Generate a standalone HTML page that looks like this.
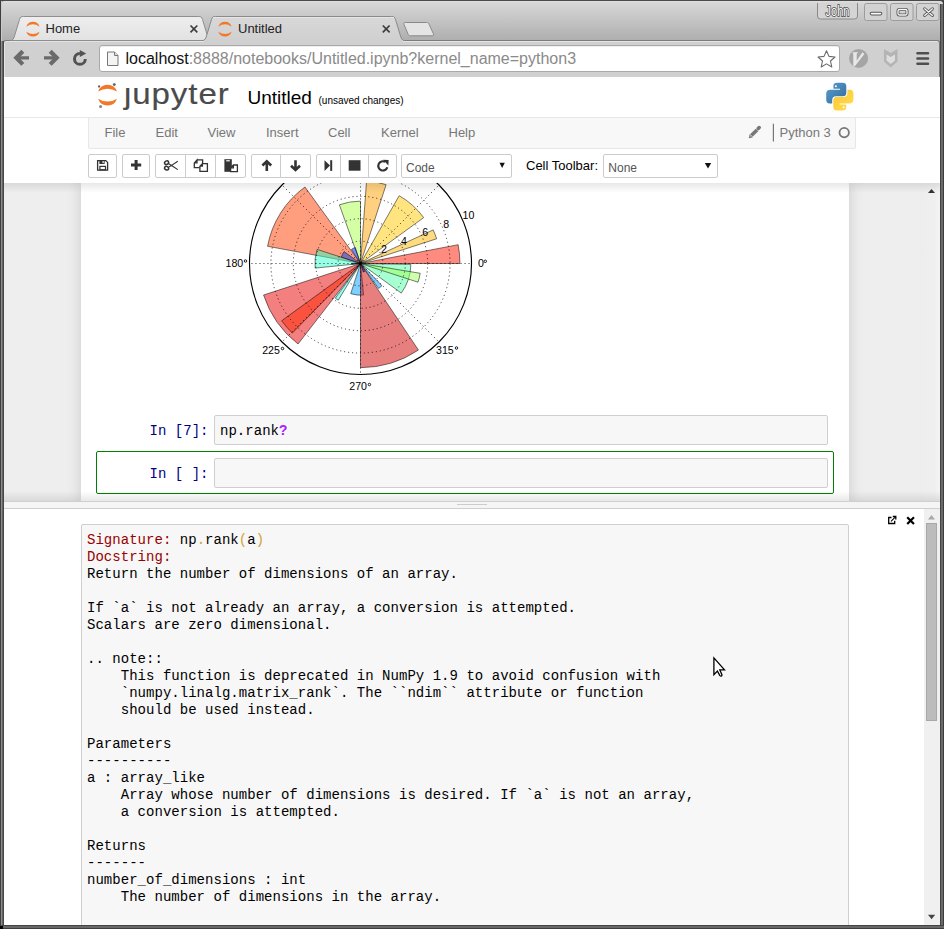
<!DOCTYPE html>
<html><head><meta charset="utf-8">
<style>
*{box-sizing:border-box;margin:0;padding:0}
html,body{width:944px;height:929px;overflow:hidden;background:#3b3b3b;font-family:"Liberation Sans",sans-serif;position:relative}
.a{position:absolute}
.mono{font-family:"Liberation Mono",monospace;letter-spacing:0.03px}
svg{display:block}
/* chrome */
#titlebar{left:1px;top:1px;width:942px;height:44px;background:linear-gradient(#e0e0e0 0,#d6d6d6 2px,#aeaeae 40px);border-radius:3px 3px 0 0}
#toolbar{left:3px;top:40px;width:937px;height:38px;background:#d0d0d0;border:1px solid #7c7c7c;border-bottom:none;border-radius:3px 3px 0 0;box-shadow:inset 1px 1px 0 #e4e4e4}
#omni{left:99px;top:45px;width:741px;height:27px;background:#fff;border:1px solid #a9a9a9;border-radius:3px;box-shadow:inset 0 1px 0 #eee}
.tabtxt{font-size:13px;color:#222;top:21px;line-height:16px}
.url{left:125.5px;top:50px;font-size:16px;line-height:18px;color:#8a8a8a;white-space:nowrap;letter-spacing:0}
/* page */
#page{left:4px;top:77px;width:936px;height:848px;background:#fff;overflow:hidden}
#hdr-border{left:4px;top:117px;width:936px;height:1px;background:#e7e7e7}
#menubar{left:88px;top:117px;width:768px;height:32px;background:#f8f8f8;border:1px solid #e7e7e7;border-radius:2px}
.menu{top:125px;font-size:13px;color:#777;line-height:16px}
.btn{top:154px;height:24px;background:#fff;border:1px solid #ccc;border-radius:2px}
.bdiv{top:155px;width:1px;height:22px;background:#ccc}
#nbarea{left:4px;top:183px;width:917px;height:318px;background:#eee;overflow:hidden}
#nbc{left:77px;top:0;width:768px;height:318px;background:#fff;box-shadow:0 0 12px 1px rgba(87,87,87,.2);overflow:hidden}
.prompt{font-size:14px;color:#303F9F;line-height:17px;color:#000080}
.inarea{background:#f7f7f7;border:1px solid #cfcfcf;border-radius:2px}
#pager{left:4px;top:509px;width:936px;height:416px;background:#fff;overflow:hidden}
#pre{left:81px;top:524px;width:768px;height:420px;background:#f7f7f7;border:1px solid #cfcfcf;border-radius:2px}
.ptxt{left:87px;top:532px;font-size:14px;line-height:17px;color:#000;white-space:pre;letter-spacing:0.03px}
</style></head><body>
<!-- window chrome -->
<div id="titlebar" class="a"></div>
<div class="a" style="left:0;top:0;width:944px;height:1px;background:#4a4a4a"></div>
<div id="toolbar" class="a"></div>
<div id="omni" class="a"></div>
<svg class="a" style="left:0;top:0" width="944" height="77" viewBox="0 0 944 77">
 <defs>
  <linearGradient id="gHome" x1="0" y1="0" x2="0" y2="1"><stop offset="0" stop-color="#eeeeee"/><stop offset="1" stop-color="#e2e2e2"/></linearGradient>
  <linearGradient id="gAct" x1="0" y1="0" x2="0" y2="1"><stop offset="0" stop-color="#d8d8d8"/><stop offset="1" stop-color="#d0d0d0"/></linearGradient>
 </defs>
 <!-- Home tab (inactive) -->
 <path d="M10 40.5 C13 40.5 13.5 39 14.5 36 L19.5 19.5 C20.3 17 21 16.5 23.5 16.5 L198.5 16.5 C201 16.5 201.7 17 202.5 19.5 L207.5 36 C208.5 39 209 40.5 212 40.5 Z" fill="url(#gHome)" stroke="#8e8e8e" stroke-width="1"/>
 <!-- toolbar top line under inactive area -->
 <!-- Untitled tab (active) -->
 <path d="M202 40.5 C205 40.5 205.5 39 206.5 36 L211.5 19.5 C212.3 17 213 16.5 215.5 16.5 L391.5 16.5 C394 16.5 394.7 17 395.5 19.5 L400.5 36 C401.5 39 402 40.5 405 40.5" fill="url(#gAct)" stroke="#8a8a8a" stroke-width="1"/>
 <rect x="204" y="40" width="199" height="2" fill="#d0d0d0"/>
 <path d="M213 17.5 L394 17.5" stroke="#e6e6e6" stroke-width="1"/>
 <!-- new tab button -->
 <path d="M405.5 22.5 L426.5 22.5 C428 22.5 428.6 23 429.2 24.5 L433.5 34 C434 35.3 433.5 35.8 432 35.8 L410.5 35.8 C409 35.8 408.5 35.3 408 34 L404 24.5 C403.5 23 404 22.5 405.5 22.5 Z" fill="#e4e4e4" stroke="#8a8a8a" stroke-width="1"/>
 <!-- favicons -->
 <g fill="#f37726">
  <path transform="translate(32.95 29.15) scale(0.71) translate(-107.55 -95.15)" d="M98.2 91.6 A9.83 9.83 0 0 1 116.9 91.6 A16.5 16.5 0 0 0 98.2 91.6 Z M98.2 98.7 A9.83 9.83 0 0 0 116.9 98.7 A16.5 16.5 0 0 1 98.2 98.7 Z"/>
  <path transform="translate(225 29.15) scale(0.71) translate(-107.55 -95.15)" d="M98.2 91.6 A9.83 9.83 0 0 1 116.9 91.6 A16.5 16.5 0 0 0 98.2 91.6 Z M98.2 98.7 A9.83 9.83 0 0 0 116.9 98.7 A16.5 16.5 0 0 1 98.2 98.7 Z"/>
 </g>
 <!-- close x -->
 <g stroke="#3c3c3c" stroke-width="1.7">
  <path d="M190.5 25.5 L197.3 32.3 M197.3 25.5 L190.5 32.3"/>
  <path d="M382.8 25.5 L389.6 32.3 M389.6 25.5 L382.8 32.3"/>
 </g>
 <!-- back / forward / reload -->
 <g fill="none" stroke="#6a6a6a" stroke-width="4.2" stroke-linejoin="miter">
  <path d="M22.8 51.2 L16.3 57.8 L22.8 64.4"/>
  <path d="M50.2 51.2 L56.7 57.8 L50.2 64.4"/>
 </g>
 <g stroke="#6a6a6a" stroke-width="3.3"><path d="M18 57.9 L29 57.9 M55 57.9 L44 57.9"/></g>
 <path d="M85.3 58.9 A5.4 5.4 0 1 1 79.9 53.5" fill="none" stroke="#525252" stroke-width="3"/>
 <path d="M79.8 49.9 L86.2 53.5 L79.8 57 Z" fill="#525252"/>
 <!-- page icon -->
 <path d="M107.5 52 L114.5 52 L118 55.5 L118 65.5 L107.5 65.5 Z" fill="#f4f4f4" stroke="#777" stroke-width="1"/>
 <path d="M114.5 52 L114.5 55.5 L118 55.5" fill="#ddd" stroke="#777" stroke-width="1"/>
 <!-- star -->
 <path d="M826.5 50.8 L829 56.4 L835 57 L830.5 61 L831.8 67 L826.5 63.9 L821.2 67 L822.5 61 L818 57 L824 56.4 Z" fill="#fff" stroke="#6a6a6a" stroke-width="1.1" stroke-linejoin="round"/>
 <!-- V icon -->
 <circle cx="858.6" cy="58.4" r="9.5" fill="#a5a5a5"/>
 <path d="M852.2 52.3 L858.4 52.3 L856.7 53.7 L856.7 60.8 L862.4 52.3 L864.4 53.9 L854.6 66.4 L853.3 65.6 L853.3 53.7 Z" fill="#e8e8e8"/>
 <!-- shield -->
 <path d="M884 49 L890.7 53 L897.5 49 L897.5 61.5 L890.7 67.5 L884 61.5 Z" fill="#b4b4b4"/>
 <path d="M886.5 54.5 L890.7 57 L895 54.5 L895 60.5 L890.7 64 L886.5 60.5 Z" fill="#dedede"/>
 <!-- menu -->
 <g stroke="#4e4e4e" stroke-width="2.6" stroke-linecap="round">
  <path d="M917.5 53.2 L928 53.2 M917.5 58.5 L928 58.5 M917.5 63.8 L928 63.8"/>
 </g>
 <!-- window buttons -->
 <path d="M817.5 3 L817.5 16 Q817.5 19 820.5 19 L854.5 19 Q857.5 19 857.5 16 L857.5 3" fill="#d4d4d4" stroke="#8a8a8a" stroke-width="1"/>
 <g fill="#d2d2d2" stroke="#9c9c9c" stroke-width="1">
  <rect x="864.5" y="3.5" width="22.5" height="17" rx="2"/>
  <rect x="890.5" y="3.5" width="22.5" height="17" rx="2"/>
  <rect x="916.5" y="3.5" width="22.5" height="17" rx="2"/>
 </g>
 <g stroke="#555" stroke-width="3.6" fill="none" stroke-linecap="round">
  <path d="M871.5 13.6 L880.5 13.6"/>
  <rect x="898" y="9.5" width="9" height="5.5" rx="1.5" stroke-width="3"/>
  <path d="M924.7 8.8 L932.4 15.4 M932.4 8.8 L924.7 15.4" stroke-width="3"/>
 </g>
 <g stroke="#f8f8f8" stroke-width="1.6" fill="none" stroke-linecap="round">
  <path d="M871.5 13.6 L880.5 13.6"/>
  <rect x="898" y="9.5" width="9" height="5.5" rx="1.5" stroke-width="1.3"/>
  <path d="M924.7 8.8 L932.4 15.4 M932.4 8.8 L924.7 15.4" stroke-width="1.3"/>
 </g>
 <text x="825.5" y="16.4" font-family="Liberation Sans" font-size="14.5" fill="#fff" stroke="#3a3a3a" stroke-width="1.5" paint-order="stroke" textLength="24" lengthAdjust="spacingAndGlyphs" style="-webkit-font-smoothing:antialiased">John</text>
</svg>
<div class="a tabtxt" style="left:45.5px">Home</div>
<div class="a tabtxt" style="left:238px">Untitled</div>
<div class="a url"><span style="color:#111">localhost</span>:8888/notebooks/Untitled.ipynb?kernel_name=python3</div>

<div id="page" class="a"></div>
<div id="hdr-border" class="a"></div>
<div id="menubar" class="a"></div>
<div class="a menu" style="left:104.5px">File</div>
<div class="a menu" style="left:155.5px">Edit</div>
<div class="a menu" style="left:207.5px">View</div>
<div class="a menu" style="left:266px">Insert</div>
<div class="a menu" style="left:328px">Cell</div>
<div class="a menu" style="left:381px">Kernel</div>
<div class="a menu" style="left:448.5px">Help</div>
<div class="a menu" style="left:779.5px">Python 3</div>

<div class="a" id="jlogo" style="left:123.5px;top:78px;font-size:29px;line-height:32px;color:#4b4b4b;letter-spacing:0.8px;-webkit-text-stroke:0.15px #4b4b4b;transform:scaleX(1.14);transform-origin:0 0">&#x237;upyter</div>
<div class="a" style="left:247.5px;top:87px;font-size:19px;line-height:22px;color:#000">Untitled</div>
<div class="a" style="left:318.5px;top:95px;font-size:10px;line-height:12px;color:#000">(unsaved changes)</div>

<div class="a btn" style="left:88px;width:29px"></div>
<div class="a btn" style="left:122px;width:28px"></div>
<div class="a btn" style="left:155px;width:91px"></div>
<div class="a btn" style="left:251px;width:60px"></div>
<div class="a btn" style="left:316px;width:81px"></div>
<div class="a btn" style="left:401px;width:111px"></div>
<div class="a btn" style="left:603px;width:115px"></div>
<div class="a bdiv" style="left:185px"></div>
<div class="a bdiv" style="left:215px"></div>
<div class="a bdiv" style="left:280px"></div>
<div class="a bdiv" style="left:340px"></div>
<div class="a bdiv" style="left:368px"></div>
<div class="a" style="left:526px;top:158px;font-size:13px;line-height:16px;color:#000">Cell Toolbar:</div>
<div class="a" style="left:406px;top:159.5px;font-size:12px;line-height:16px;color:#555">Code</div>
<div class="a" style="left:608.3px;top:159.5px;font-size:12px;line-height:16px;color:#555">None</div>

<svg class="a" style="left:0;top:77px" width="944" height="106" viewBox="0 77 944 106">
 <defs>
  <linearGradient id="pyb" x1="0" y1="0" x2="1" y2="1"><stop offset="0" stop-color="#5a9fd4"/><stop offset="1" stop-color="#306998"/></linearGradient>
  <linearGradient id="pyy" x1="0" y1="0" x2="1" y2="1"><stop offset="0" stop-color="#ffe052"/><stop offset="1" stop-color="#ffc331"/></linearGradient>
 </defs>
 <!-- jupyter logo -->
 <g fill="#f37726">
  <path d="M98.2 91.6 A9.83 9.83 0 0 1 116.9 91.6 A16.5 16.5 0 0 0 98.2 91.6 Z"/>
  <path d="M98.2 98.7 A9.83 9.83 0 0 0 116.9 98.7 A16.5 16.5 0 0 1 98.2 98.7 Z"/>
 </g>
 <circle cx="99.1" cy="86.5" r="1.15" fill="#616262"/><circle cx="114.3" cy="84.6" r="1.45" fill="#616262"/><circle cx="100.6" cy="106.5" r="1.55" fill="#8a8a8a"/>
 <!-- python logo -->
 <path id="pyshape" d="M833.4 86 Q833.4 82.7 837 82.7 L842.8 82.7 Q846.3 82.7 846.3 86.2 L846.3 92.8 Q846.3 96.3 842.8 96.3 L836.2 96.3 Q832.2 96.3 832.2 100.2 L832.2 103.6 L829.6 103.6 Q826.2 103.6 826.2 99.2 L826.2 93.8 Q826.2 89.7 830.3 89.7 L840 89.7 L840 88.7 L833.4 88.7 Z" fill="url(#pyb)"/>
 <path d="M833.4 86 Q833.4 82.7 837 82.7 L842.8 82.7 Q846.3 82.7 846.3 86.2 L846.3 92.8 Q846.3 96.3 842.8 96.3 L836.2 96.3 Q832.2 96.3 832.2 100.2 L832.2 103.6 L829.6 103.6 Q826.2 103.6 826.2 99.2 L826.2 93.8 Q826.2 89.7 830.3 89.7 L840 89.7 L840 88.7 L833.4 88.7 Z" fill="url(#pyy)" transform="rotate(180 839.8 96.65)"/>
 <circle cx="835.9" cy="86.3" r="1" fill="#fff"/>
 <circle cx="843.6" cy="107.2" r="1" fill="#fff"/>
 <!-- menubar right -->
 <path d="M751.3 135.6 L757 129.9" stroke="#777" stroke-width="3.6" stroke-linecap="butt"/>
 <path d="M758.2 128.6 L759.2 127.6" stroke="#777" stroke-width="3.6" stroke-linecap="round"/>
 <path d="M748.7 138.3 L749.6 134.2 L752.8 137.4 Z" fill="#777"/>
 <path d="M750.3 136.4 L751 135.5" stroke="#f8f8f8" stroke-width="0.9"/>
 <rect x="772.8" y="123.7" width="1.2" height="17.8" fill="#777"/>
 <circle cx="844.2" cy="132.6" r="4.7" fill="none" stroke="#777" stroke-width="1.8"/>
 <!-- toolbar icons -->
 <g fill="#333">
  <!-- save -->
  <path d="M97.6 160.6 L105.8 160.6 L107.6 162.4 L107.6 170.2 L97.6 170.2 Z" fill="none" stroke="#333" stroke-width="1.3"/>
  <rect x="99.4" y="160.4" width="5.2" height="3.6"/>
  <rect x="102.5" y="161.1" width="1.2" height="2" fill="#fff"/>
  <rect x="99.9" y="166.4" width="5.6" height="3.4" fill="none" stroke="#333" stroke-width="1.2"/>
  <!-- plus -->
  <path d="M134.6 159.9 L137.6 159.9 L137.6 163.4 L141.2 163.4 L141.2 166.4 L137.6 166.4 L137.6 169.9 L134.6 169.9 L134.6 166.4 L131 166.4 L131 163.4 L134.6 163.4 Z"/>
  <!-- stop -->
  <rect x="348.7" y="160.2" width="11.8" height="10.5"/>
  <!-- step forward -->
  <path d="M324.5 160.2 L330 165.5 L324.5 170.9 Z"/>
  <rect x="330.2" y="160.2" width="2" height="10.7"/>
 </g>
 <g fill="none" stroke="#333">
  <!-- scissors -->
  <ellipse cx="166.6" cy="162.7" rx="2.1" ry="1.7" stroke-width="1.5" transform="rotate(-25 166.6 162.7)"/>
  <ellipse cx="166.6" cy="168.2" rx="2.1" ry="1.7" stroke-width="1.5" transform="rotate(25 166.6 168.2)"/>
  <path d="M168.6 163.8 L171.5 165.4 L177.8 161.2 M168.6 167.1 L171.5 165.5 L177.8 169.6" stroke-width="1.1"/>
  <!-- copy -->
  <path d="M197 159.9 L202.6 159.9 L202.6 163 M199.6 167.6 L194.3 167.6 L194.3 162.9 L197 159.9 L197 162.9 L194.3 162.9" stroke-width="1.3"/>
  <path d="M202.4 163.6 L207.4 163.6 L207.4 171.4 L199.9 171.4 L199.9 166.2 Z M199.9 166.2 L202.4 166.2 L202.4 163.6" stroke-width="1.3" fill="#fff"/>
 </g>
 <g>
  <!-- paste -->
  <rect x="224.4" y="159.2" width="7.4" height="12.6" fill="#333"/>
  <rect x="226.2" y="160.2" width="3.6" height="1.2" fill="#fff"/>
  <path d="M233.4 165 L237.4 165 L237.4 171.6 L230.6 171.6 L230.6 167.8 Z M230.6 167.8 L233.4 167.8 L233.4 165" fill="#fff" stroke="#333" stroke-width="1.3"/>
 </g>
 <!-- up / down arrows -->
 <g fill="none" stroke="#333" stroke-width="2.6" stroke-linejoin="miter">
  <path d="M262.4 165.5 L266.8 161.2 L271.2 165.5 M266.8 162 L266.8 171"/>
  <path d="M291 165.7 L295.5 170 L300 165.7 M295.5 160.2 L295.5 169.3"/>
 </g>
 <!-- refresh -->
 <path d="M387.3 167.2 A4.6 4.6 0 1 1 385.2 161.9" fill="none" stroke="#333" stroke-width="2.2"/>
 <path d="M383 159.7 L388.6 160 L388.4 165.4 Z" fill="#333"/>
 <!-- select arrows -->
 <path d="M499.5 162.7 L504.8 162.7 L502.15 168 Z" fill="#111"/>
 <path d="M704.8 163 L711.2 163 L708 168.4 Z" fill="#111"/>
</svg>

<div id="nbarea" class="a">
<div id="nbc" class="a">
  <div class="a" style="left:-81px;top:-183px;width:944px;height:929px"><svg class="a" style="left:0;top:0" width="944" height="929" viewBox="0 0 944 929"><path d="M360.50 263.50L459.96 263.50A99.46 99.46 0 0 0 458.16 244.69Z" fill="rgb(255,21,0)" fill-opacity="0.5" stroke="#000" stroke-opacity="0.5" stroke-width="1"/><path d="M360.50 263.50L436.66 238.75A80.08 80.08 0 0 0 433.19 229.91Z" fill="rgb(255,184,0)" fill-opacity="0.5" stroke="#000" stroke-opacity="0.5" stroke-width="1"/><path d="M360.50 263.50L423.66 217.62A78.06 78.06 0 0 0 399.18 195.69Z" fill="rgb(255,201,0)" fill-opacity="0.5" stroke="#000" stroke-opacity="0.5" stroke-width="1"/><path d="M360.50 263.50L362.47 260.78A3.36 3.36 0 0 0 362.38 260.71Z" fill="rgb(0,0,162)" fill-opacity="0.5" stroke="#000" stroke-opacity="0.5" stroke-width="1"/><path d="M360.50 263.50L386.11 184.68A82.88 82.88 0 0 0 366.57 180.84Z" fill="rgb(255,161,0)" fill-opacity="0.5" stroke="#000" stroke-opacity="0.5" stroke-width="1"/><path d="M360.50 263.50L360.50 201.12A62.38 62.38 0 0 0 339.37 204.80Z" fill="rgb(170,255,76)" fill-opacity="0.5" stroke="#000" stroke-opacity="0.5" stroke-width="1"/><path d="M360.50 263.50L355.31 247.52A16.80 16.80 0 0 0 351.35 249.41Z" fill="rgb(0,25,255)" fill-opacity="0.5" stroke="#000" stroke-opacity="0.5" stroke-width="1"/><path d="M360.50 263.50L304.94 187.03A94.53 94.53 0 0 0 267.55 246.27Z" fill="rgb(255,62,0)" fill-opacity="0.5" stroke="#000" stroke-opacity="0.5" stroke-width="1"/><path d="M360.50 263.50L344.10 251.58A20.27 20.27 0 0 0 341.22 257.24Z" fill="rgb(0,57,255)" fill-opacity="0.5" stroke="#000" stroke-opacity="0.5" stroke-width="1"/><path d="M360.50 263.50L317.15 249.41A45.58 45.58 0 0 0 315.15 268.11Z" fill="rgb(47,255,200)" fill-opacity="0.5" stroke="#000" stroke-opacity="0.5" stroke-width="1"/><path d="M360.50 263.50L351.54 263.50A8.96 8.96 0 0 0 351.57 264.28Z" fill="rgb(0,0,220)" fill-opacity="0.5" stroke="#000" stroke-opacity="0.5" stroke-width="1"/><path d="M360.50 263.50L263.57 295.00A101.92 101.92 0 0 0 298.03 344.03Z" fill="rgb(232,0,0)" fill-opacity="0.5" stroke="#000" stroke-opacity="0.5" stroke-width="1"/><path d="M360.50 263.50L281.67 320.77A97.44 97.44 0 0 0 292.32 333.12Z" fill="rgb(255,38,0)" fill-opacity="0.5" stroke="#000" stroke-opacity="0.5" stroke-width="1"/><path d="M360.50 263.50L335.29 298.20A42.90 42.90 0 0 0 338.28 300.19Z" fill="rgb(27,255,220)" fill-opacity="0.5" stroke="#000" stroke-opacity="0.5" stroke-width="1"/><path d="M360.50 263.50L350.71 293.64A31.70 31.70 0 0 0 363.59 295.04Z" fill="rgb(0,161,255)" fill-opacity="0.5" stroke="#000" stroke-opacity="0.5" stroke-width="1"/><path d="M360.50 263.50L360.50 367.66A104.16 104.16 0 0 0 418.44 350.06Z" fill="rgb(209,0,0)" fill-opacity="0.5" stroke="#000" stroke-opacity="0.5" stroke-width="1"/><path d="M360.50 263.50L363.27 272.02A8.96 8.96 0 0 0 364.71 271.41Z" fill="rgb(0,0,220)" fill-opacity="0.5" stroke="#000" stroke-opacity="0.5" stroke-width="1"/><path d="M360.50 263.50L378.60 288.42A30.80 30.80 0 0 0 381.90 285.66Z" fill="rgb(0,153,255)" fill-opacity="0.5" stroke="#000" stroke-opacity="0.5" stroke-width="1"/><path d="M360.50 263.50L401.27 293.12A50.40 50.40 0 0 0 410.89 264.38Z" fill="rgb(82,255,165)" fill-opacity="0.5" stroke="#000" stroke-opacity="0.5" stroke-width="1"/><path d="M360.50 263.50L418.02 282.19A60.48 60.48 0 0 0 420.19 273.27Z" fill="rgb(156,255,90)" fill-opacity="0.5" stroke="#000" stroke-opacity="0.5" stroke-width="1"/><circle cx="360.5" cy="263.5" r="22.40" fill="none" stroke="#000" stroke-width="0.75" stroke-dasharray="1.1 2.9"/><circle cx="360.5" cy="263.5" r="44.80" fill="none" stroke="#000" stroke-width="0.75" stroke-dasharray="1.1 2.9"/><circle cx="360.5" cy="263.5" r="67.20" fill="none" stroke="#000" stroke-width="0.75" stroke-dasharray="1.1 2.9"/><circle cx="360.5" cy="263.5" r="89.60" fill="none" stroke="#000" stroke-width="0.75" stroke-dasharray="1.1 2.9"/><line x1="360.5" y1="263.5" x2="472.50" y2="263.50" stroke="#000" stroke-width="0.75" stroke-dasharray="1.1 2.9"/><line x1="360.5" y1="263.5" x2="439.70" y2="184.30" stroke="#000" stroke-width="0.75" stroke-dasharray="1.1 2.9"/><line x1="360.5" y1="263.5" x2="360.50" y2="151.50" stroke="#000" stroke-width="0.75" stroke-dasharray="1.1 2.9"/><line x1="360.5" y1="263.5" x2="281.30" y2="184.30" stroke="#000" stroke-width="0.75" stroke-dasharray="1.1 2.9"/><line x1="360.5" y1="263.5" x2="248.50" y2="263.50" stroke="#000" stroke-width="0.75" stroke-dasharray="1.1 2.9"/><line x1="360.5" y1="263.5" x2="281.30" y2="342.70" stroke="#000" stroke-width="0.75" stroke-dasharray="1.1 2.9"/><line x1="360.5" y1="263.5" x2="360.50" y2="375.50" stroke="#000" stroke-width="0.75" stroke-dasharray="1.1 2.9"/><line x1="360.5" y1="263.5" x2="439.70" y2="342.70" stroke="#000" stroke-width="0.75" stroke-dasharray="1.1 2.9"/><circle cx="360.5" cy="263.5" r="111.00" fill="none" stroke="#000" stroke-width="1.15"/><g font-family="Liberation Sans" font-size="10.6" fill="#000"><text x="225.5" y="267.0">180</text><text x="262.2" y="354.0">225</text><text x="349.3" y="390.0">270</text><text x="436.0" y="354.0">315</text><text x="478.0" y="267.0">0</text><text x="381.0" y="252.5">2</text><text x="401.0" y="245.0">4</text><text x="422.3" y="236.0">6</text><text x="443.3" y="227.8">8</text><text x="462.5" y="218.7">10</text></g><circle cx="245.5" cy="261.0" r="1.25" fill="none" stroke="#111" stroke-width="0.95"/><circle cx="282.5" cy="348.5" r="1.25" fill="none" stroke="#111" stroke-width="0.95"/><circle cx="369.4" cy="384.5" r="1.25" fill="none" stroke="#111" stroke-width="0.95"/><circle cx="456.5" cy="348.0" r="1.25" fill="none" stroke="#111" stroke-width="0.95"/><circle cx="485.3" cy="261.3" r="1.25" fill="none" stroke="#111" stroke-width="0.95"/></svg></div>
</div>
</div>
<div class="a inarea" style="left:214px;top:415px;width:614px;height:30px"></div>
<div class="a prompt mono" style="left:149.5px;top:423px">In&nbsp;[7]:</div>
<div class="a mono" style="left:220px;top:423px;font-size:14px;line-height:17px;color:#000">np.rank<span style="color:#AA22FF;font-weight:bold">?</span></div>
<div class="a" style="left:96px;top:451px;width:738px;height:43px;border:1px solid #008000;border-radius:2px"></div>
<div class="a inarea" style="left:214px;top:458px;width:614px;height:30px"></div>
<div class="a prompt mono" style="left:149.5px;top:466px">In&nbsp;[&nbsp;]:</div>

<div class="a" style="left:921px;top:183px;width:19px;height:318px;background:linear-gradient(90deg,#ececec 0,#eeeeee 3px,#efefef 14px,#f3f3f3 17px)"></div>
<svg class="a" style="left:920px;top:183px" width="20" height="20"><path d="M8 10 L11.5 6 L15 10 Z" fill="#333"/></svg>
<div class="a" style="left:4px;top:183px;width:936px;height:10px;background:linear-gradient(rgba(0,0,0,.09),rgba(0,0,0,0))"></div>
<div class="a" style="left:4px;top:491px;width:936px;height:10px;background:linear-gradient(rgba(0,0,0,0),rgba(0,0,0,.09))"></div>
<div class="a" style="left:4px;top:501px;width:936px;height:8px;background:#f5f5f5;border-top:1px solid #cfcfcf;border-bottom:1px solid #cfcfcf"></div>
<div class="a" style="left:457px;top:504px;width:30px;height:1px;background:#ccc"></div>

<div id="pager" class="a"></div>
<div id="pre" class="a"></div>
<div class="a ptxt mono"><span style="color:#990000">Signature:</span> np<span style="color:#d0a52e">.</span>rank<span style="color:#d0a52e">(</span>a<span style="color:#d0a52e">)</span>
<span style="color:#990000">Docstring:</span>
Return the number of dimensions of an array.

If `a` is not already an array, a conversion is attempted.
Scalars are zero dimensional.

.. note::
    This function is deprecated in NumPy 1.9 to avoid confusion with
    `numpy.linalg.matrix_rank`. The ``ndim`` attribute or function
    should be used instead.

Parameters
----------
a : array_like
    Array whose number of dimensions is desired. If `a` is not an array,
    a conversion is attempted.

Returns
-------
number_of_dimensions : int
    The number of dimensions in the array.</div>

<!-- pager scrollbar -->
<div class="a" style="left:924px;top:509px;width:16px;height:416px;background:#f0f0f0"></div>
<div class="a" style="left:926px;top:523px;width:11px;height:198px;background:#bcbcbc;border:1px solid #a8a8a8"></div>
<svg class="a" style="left:0;top:500px" width="944" height="429" viewBox="0 500 944 429">
 <path d="M928 519.5 L931.5 515 L935 519.5 Z" fill="#a8a8a8"/>
 <path d="M928 914.8 L935.2 914.8 L931.6 919.3 Z" fill="#444"/>
 <!-- expand icon -->
 <path d="M892.8 516.5 L895.8 516.5 L895.8 519.5" fill="none" stroke="#000" stroke-width="1.3"/>
 <path d="M891 521.3 L895.6 516.7" stroke="#000" stroke-width="1.1"/>
 <path d="M891.5 517.5 L888.7 517.5 L888.7 523.5 L894.7 523.5 L894.7 520.8" fill="none" stroke="#000" stroke-width="1.3"/>
 <!-- close icon -->
 <path d="M908 518 L913.2 523.2 M913.2 518 L908 523.2" stroke="#000" stroke-width="2.2" stroke-linecap="square"/>
 <!-- cursor -->
 <path d="M713.9 657.9 L713.9 674.6 L717.4 671.1 L719.9 675.6 Q720.6 676.4 721.6 675.9 Q722.3 675.3 721.9 674.6 L719.8 669.9 L724.5 669.9 Z" fill="#fff" stroke="#000" stroke-width="1.3" stroke-linejoin="miter"/>
</svg>

<!-- frame edges -->
<div class="a" style="left:0;top:0;width:1px;height:929px;background:#3e3e3e"></div>
<div class="a" style="left:1px;top:1px;width:1px;height:40px;background:#cacaca"></div>
<div class="a" style="left:1px;top:41px;width:3px;height:888px;background:linear-gradient(90deg,#8e8e8e 0,#8e8e8e 1px,#626262 1px,#626262 2px,#474747 2px)"></div>
<div class="a" style="left:940px;top:4px;width:4px;height:925px;background:linear-gradient(90deg,#444 0,#444 1px,#6a6a6a 1px,#6a6a6a 3px,#3c3c3c 3px)"></div>
<div class="a" style="left:0;top:925px;width:944px;height:4px;background:linear-gradient(#444 0,#444 1px,#686868 1px,#686868 3px,#3e3e3e 3px)"></div>
<div class="a" style="left:0;top:926px;width:3px;height:3px;background:#000"></div>
</body></html>
